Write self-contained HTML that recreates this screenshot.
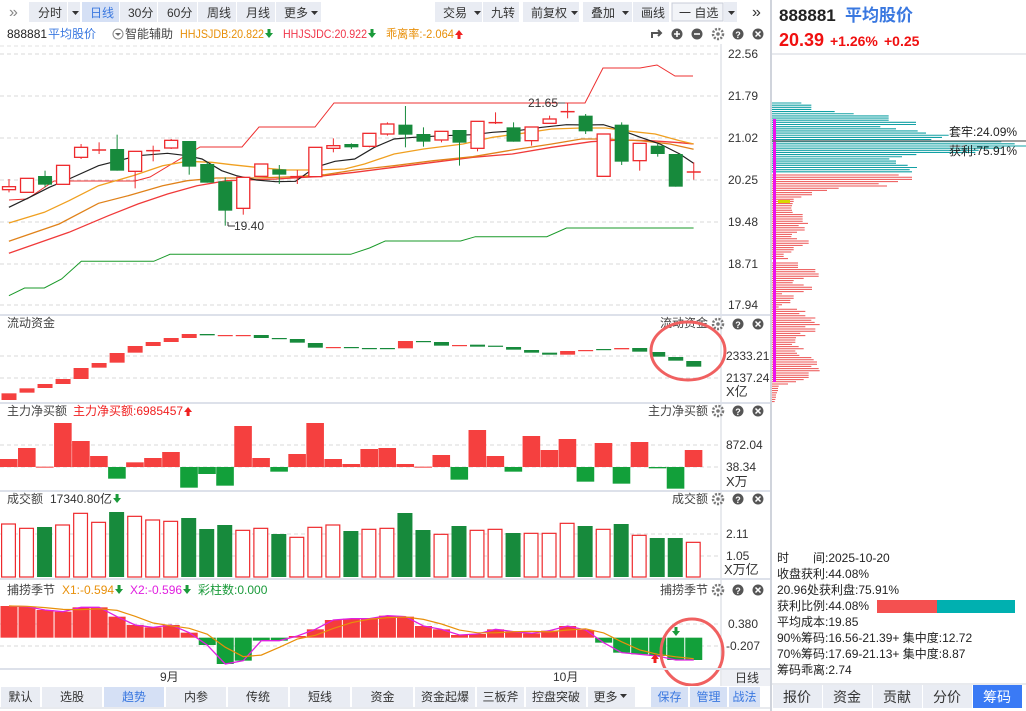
<!DOCTYPE html>
<html><head><meta charset="utf-8">
<style>
body{margin:0;width:1026px;height:711px;overflow:hidden;background:#fff;font-family:"Liberation Sans","Noto Sans CJK SC",sans-serif;}
svg{position:absolute;left:0;top:0}
text{font-family:"Liberation Sans","Noto Sans CJK SC",sans-serif;}
</style></head><body>
<svg id="s" width="1026" height="711" xmlns="http://www.w3.org/2000/svg"></svg>
<script>
const S=document.getElementById('s');let h='';
const R='#ee2a2d',G='#178a3c',RF='#f5403f';
let tid=0;const arrows=[];
function r(x,y,w,hh,f,st){h+=`<rect x="${x}" y="${y}" width="${w}" height="${hh}" fill="${f}"${st?` stroke="${st}"`:''}/>`}
function l(x1,y1,x2,y2,c,w,d){h+=`<line x1="${x1}" y1="${y1}" x2="${x2}" y2="${y2}" stroke="${c}" stroke-width="${w||1}"${d?' stroke-dasharray="4,3"':''}/>`}
function t(x,y,s,c,fs,extra){tid++;h+=`<text id="t${tid}" x="${x}" y="${y}" fill="${c||'#333'}" font-size="${fs||12}" ${extra||''}>${s}</text>`;return 't'+tid}
function ta(x,y,s,c,dir,ac,fs,tl){const id=t(x,y,s,c,fs||12,tl?`textLength="${tl}" lengthAdjust="spacingAndGlyphs"`:'');arrows.push([id,x,y-4,dir,ac,tl]);}
function tr(x,y,s){t(x,y,s,'#444',12,'text-anchor="end"')}
function pl(pts,c,w){h+=`<polyline fill="none" stroke="${c}" stroke-width="${w||1}" points="${pts.map(p=>p.join(',')).join(' ')}"/>`}
function arrD(x,y,c){return `<path d="M${x-1.5} ${y-5}h3v4h2.5l-4 5l-4-5h2.5z" fill="${c}"/>`}
function arrU(x,y,c){return `<path d="M${x-1.5} ${y+5}h3v-4h2.5l-4-5l-4 5h2.5z" fill="${c}"/>`}
r(0,0,770,24,'#fff');
[[29,68],[68,81],[82,120,1],[120,158],[158,198],[198,237],[237,276],[276,322],[435,483],[483,520],[523,580],[583,633],[633,670],[724,738]].forEach(a=>r(a[0],2,a[1]-a[0]-1,20,a[2]?'#d5e0f5':'#e9ecf3'));
r(672,3,51,18,'#f2f4f8','#c8cdd8');
t(9,17,'»','#888',16);
[['分时',38],['日线',90],['30分',128],['60分',167],['周线',207],['月线',246],['更多',284],['交易',443],['九转',491],['前复权',531],['叠加',591],['画线',641],['一 自选',679],['»',752]].forEach(a=>t(a[1],17,a[0],a[0]=='日线'?'#3a78e0':'#333',a[0]=='»'?16:12));
[72,311,474,571,622,728].forEach(x=>h+=`<path d="M${x} 11h7l-3.5 4z" fill="#333"/>`);
t(7,38,'888881','#222',12);t(48,38,'平均股价','#3a78e0',12);
h+=`<circle cx="118" cy="34" r="5" fill="none" stroke="#888"/><path d="M115 33h6l-3 3z" fill="#666"/>`;
t(125,38,'智能辅助','#444',12);
ta(180,38,'HHJSJDB:20.822','#e8900a','d','#1a9a3a',12,84);ta(283,38,'HHJSJDC:20.922','#f0364a','d','#1a9a3a',12,84);ta(386,38,'乖离率:-2.064','#e8900a','u','#f02020',12,68);
function icons(y,set){
 if(set){h+=`<path d="M652 ${y+4}v-5h9m-3-3l3 3l-3 3" fill="none" stroke="#555" stroke-width="2"/>`;
 h+=`<circle cx="677" cy="${y}" r="5.5" fill="#555"/><path d="M674 ${y}h6M677 ${y-3}v6" stroke="#fff" stroke-width="1.6"/>`;
 h+=`<circle cx="697" cy="${y}" r="5.5" fill="#555"/><path d="M694 ${y}h6" stroke="#fff" stroke-width="1.6"/>`;}
 h+=`<circle cx="718" cy="${y}" r="5" fill="none" stroke="#777" stroke-width="2.5" stroke-dasharray="2,1.4"/><circle cx="718" cy="${y}" r="1.8" fill="#777"/>`;
 h+=`<circle cx="738" cy="${y}" r="5.5" fill="#555"/><text x="738" y="${y+4}" fill="#fff" font-size="9" font-weight="bold" text-anchor="middle">?</text>`;
 h+=`<circle cx="758" cy="${y}" r="5.5" fill="#555"/><path d="M755.5 ${y-2.5}l5 5m0-5l-5 5" stroke="#fff" stroke-width="1.5"/>`;
}
icons(34,1);
[[54,'22.56'],[96,'21.79'],[138,'21.02'],[180,'20.25'],[222,'19.48'],[264,'18.71'],[305,'17.94']].forEach(a=>{l(0,a[0],720,a[0],'#d8d8d8',1,1);t(728,a[0]+4,a[1],'#333',12)});
l(0,46,720,46,'#e0e0e0',1,1);
const M=a=>a.map(p=>[+(p[0]/2.03).toFixed(1),+(44+p[1]/3).toFixed(1)]);
pl([[9,200],[27,199],[54,181],[135,181],[150,177],[200,147],[242,147],[259,127],[315,127],[334,103],[585,103],[603,68],[640,68],[657,65],[675,76],[693,76]],'#ee3030');
pl(M([[18,755],[50,732],[90,732],[125,705],[165,652],[312,652],[345,631],[712,631],[750,612],[782,591],[935,591],[965,578],[1110,578],[1150,552],[1408,552]]),'#1a9a2a');
pl(M([[18,628],[140,565],[220,515],[280,480],[340,450],[400,425],[460,410],[560,405],[640,398],[720,385],[800,370],[880,355],[960,340],[1040,330],[1120,310],[1200,293],[1260,288],[1320,290],[1380,296],[1408,300]]),'#f03a3a',1.3);
pl(M([[18,592],[120,540],[200,478],[260,455],[330,425],[380,410],[440,402],[520,402],[600,398],[660,392],[720,378],[800,365],[880,350],[960,338],[1040,318],[1120,300],[1180,285],[1230,285],[1300,290],[1360,300],[1408,316]]),'#e0821a',1.3);
pl(M([[18,537],[90,505],[140,470],[200,425],[270,395],[330,365],[380,352],[430,355],[470,362],[520,370],[580,378],[640,378],[700,375],[740,360],[800,330],[860,315],[940,300],[1000,280],[1060,268],[1120,255],[1180,252],[1230,252],[1280,262],[1330,270],[1380,290],[1408,300]]),'#f0a020',1.3);
pl(M([[18,490],[60,460],[100,430],[140,405],[200,365],[240,350],[280,335],[340,328],[380,335],[410,345],[450,380],[480,395],[520,408],[560,413],[600,412],[640,370],[680,352],[720,345],[760,310],[800,285],[840,280],[900,275],[960,272],[1000,265],[1050,260],[1100,250],[1150,242],[1190,243],[1225,242],[1260,258],[1300,280],[1340,300],[1380,330],[1408,358]]),'#222',1.2);
const C=[['r',428,437,405,445],['r',403,445,403,445],['g',396,422,380,430],['r',364,421,364,421],['r',310,340,300,345],['r',316,320,295,330],['g',315,380,272,380],['r',322,382,322,433],['r',318,322,305,352],['r',289,312,285,315],['g',291,368,291,392],['g',360,416,355,416],['g',412,500,400,545],['r',400,493,400,512],['r',360,397,360,397],['g',376,392,363,420],['r',396,400,378,420],['r',310,398,310,398],['r',305,313,283,325],['g',300,310,298,315],['r',268,307,268,310],['r',240,270,235,275],['g',242,272,186,310],['g',270,293,250,308],['r',262,288,262,295],['g',258,296,258,365],['r',232,313,232,322],['r',234,238,205,240],['g',250,293,235,293],['r',249,290,249,305],['r',225,238,215,240],['r',201,205,176,223],['g',215,262,210,270],['r',270,397,270,397],['g',242,353,235,363],['r',298,350,298,380],['g',305,330,300,338],['g',330,428,330,428],['r',382,386,355,407]];
const Y=z=>44+z/3;
C.forEach((c,i)=>{const x=9+18.02*i,col=c[0]=='r'?R:G;
 l(x,Y(c[3]),x,Y(c[4]),col,1);
 let a=Y(c[1]),b=Y(c[2]);
 if(b-a<2.5){l(x-7,(a+b)/2,x+7,(a+b)/2,col,1.5)}
 else if(c[0]=='r')h+=`<rect x="${x-6.5}" y="${a}" width="13" height="${b-a}" fill="#fff" stroke="${R}" stroke-width="1.3"/>`;
 else r(x-7,a,14,b-a,G);});
t(528,107,'21.65','#333',12);l(558,103,565,103,'#555');
l(228,222,228,226,'#333');l(228,226,235,226,'#333');t(234,230,'19.40','#333',12);
l(721,44,721,686,'#d0d4dc',1);
[314,402,490,578].forEach(y=>r(0,y,770,2,'#dde1ea'));
t(7,327,'流动资金','#444',12);tr(708,327,'流动资金');icons(324,0);
l(0,356,720,356,'#d8d8d8',1,1);l(0,378,720,378,'#d8d8d8',1,1);
t(726,360,'2333.21','#333',12);t(726,382,'2137.24','#333',12);t(726,396,'X亿','#333',13);
const F=[[250,270,'r'],[235,248,'r'],[222,234,'r'],[207,222,'r'],[174,207,'r'],[159,173,'r'],[129,158,'r'],[108,128,'r'],[96,108,'r'],[84,96,'r'],[72,84,'r'],[72,76,'g'],[75,77,'r'],[75,77,'r'],[75,84,'g'],[84,87,'g'],[87,98,'g'],[99,113,'g'],[111,113,'r'],[111,114,'g'],[114,116,'g'],[114,116,'g'],[93,115,'r'],[93,96,'g'],[96,107,'g'],[105,108,'r'],[104,110,'g'],[107,110,'g'],[111,119,'g'],[120,128,'g'],[128,134,'g'],[123,134,'r'],[120,122,'r'],[117,119,'g'],[114,118,'r'],[114,125,'g'],[126,140,'g'],[141,152,'g'],[153,170,'g']];
F.forEach((f,i)=>{const a=310+f[0]/3,b=Math.max(310+f[1]/3,a+1.2);r(i*18.02+1.5,a,15,b-a,f[2]=='r'?RF:G)});
t(7,415,'主力净买额','#444',12);ta(73,415,'主力净买额:6985457','#f02020','u','#f02020');
tr(708,415,'主力净买额');icons(411,0);
l(0,445,720,445,'#d8d8d8',1,1);l(0,467,720,467,'#d8d8d8',1,1);
t(726,449,'872.04','#333',12);t(726,471,'38.34','#333',12);t(726,486,'X万','#333',13);
const Z=[447,414,470,339,393,438,-506,457,444,426,-533,-492,-527,348,444,-485,432,339,447,462,417,414,462,470,435,-509,360,438,-485,378,420,387,-515,399,-521,396,-475,-536,420];
const z0=467;
Z.forEach((v,i)=>{const x=i*18.02;if(v>0){const y=310+v/3;r(x,y,17.6,Math.max(z0-y,1),RF)}else{const y=310-v/3;r(x,z0,17.6,y-z0,'#12a03a')}});
t(7,503,'成交额','#444',12);ta(50,503,'17340.80亿','#333','d','#1a9a3a');
tr(708,503,'成交额');icons(499,0);
l(0,534,720,534,'#d8d8d8',1,1);l(0,556,720,556,'#d8d8d8',1,1);
t(726,538,'2.11','#333',12);t(726,560,'1.05','#333',12);t(724,574,'X万亿','#333',13);
const V=[102,115,111,105,70,97,66,79,90,94,84,117,105,121,115,132,142,112,105,123,118,115,69,120,133,108,121,118,129,130,130,100,108,118,102,136,144,144,157];
const VG=[2,6,10,11,12,15,19,22,23,25,28,32,34,36,37];
V.forEach((v,i)=>{const x=i*18.02+1,y=490+v/3;if(VG.includes(i))r(x,y,15,577-y,G);else h+=`<rect x="${x+0.6}" y="${y}" width="13.8" height="${577-y}" fill="#fff" stroke="${R}" stroke-width="1.2"/>`});
t(7,594,'捕捞季节','#444',12);ta(62,594,'X1:-0.594','#e8900a','d','#1a9a3a');
ta(130,594,'X2:-0.596','#e020e0','d','#1a9a3a');t(198,594,'彩柱数:0.000','#1a9a3a',12);
tr(708,594,'捕捞季节');icons(590,0);
l(0,624,720,624,'#d8d8d8',1,1);l(0,646,720,646,'#d8d8d8',1,1);
t(728,628,'0.380','#333',12);t(726,650,'-0.207','#333',12);
const B=[108,110,120,125,112,112,140,165,172,165,188,-225,-282,-272,-212,-212,198,178,150,146,146,137,140,168,178,195,192,178,185,190,182,168,180,-218,-248,-253,-258,-270,-270];
const b0=570+203/3;const mp=[],op=[];
B.forEach((v,i)=>{const x=i*18.02;let y=570+Math.abs(v)/3;if(v>0)r(x+0.5,y,17,b0-y,'#f53c3c');else r(x+0.5,b0,17,y-b0,'#12a03a');mp.push([x+9,y]);});
pl(mp,'#e020e0',1.3);
for(let i=0;i<B.length;i++){let s=0,n=0;for(let j=Math.max(0,i-2);j<=i;j++){s+=mp[j][1];n++}op.push([mp[i][0],+(s/n).toFixed(1)])}
pl(op,'#e8900a',1.2);
h+=arrD(676,632,'#1a9a3a');h+=arrU(655,658,'#f02020');
h+=`<ellipse cx="688" cy="351" rx="37" ry="29" fill="none" stroke="#f06060" stroke-width="3"/>`;
h+=`<ellipse cx="692" cy="652" rx="31" ry="33" fill="none" stroke="#f06060" stroke-width="3"/>`;
r(0,668,770,2,'#dde1ea');
t(160,681,'9月','#333',12);t(553,681,'10月','#333',12);
r(722,670,48,16,'#eef0f5');t(735,682,'日线','#333',12);
r(0,686,770,25,'#fff');
const TB=[[0,41,'默认'],[41,103,'选股'],[103,165,'趋势'],[165,227,'内参'],[227,289,'传统'],[289,351,'短线'],[351,414,'资金'],[414,476,'资金起爆'],[476,525,'三板斧'],[525,587,'控盘突破'],[587,636,'更多'],[650,689,'保存'],[689,728,'管理'],[728,761,'战法']];
TB.forEach(a=>{const act=a[2]=='趋势'||a[0]>=650;r(a[0]+1,687,a[1]-a[0]-2,20,act?'#d5e0f5':'#e9ecf3');h+=`<text x="${(a[0]+a[1])/2-(a[2]=='更多'?6:0)}" y="701" fill="${act?'#3a78e0':'#333'}" font-size="12" text-anchor="middle">${a[2]}</text>`});
h+=`<path d="M620 694h7l-3.5 4z" fill="#333"/>`;
l(0,708,770,708,'#d0d4dc');
r(770,0,2,711,'#d0d4dc');
t(779,21,'888881','#222',17,'font-weight="bold"');t(845,21,'平均股价','#3a78e0',17,'font-weight="bold"');
t(779,46,'20.39','#f01010',18,'font-weight="bold"');t(830,46,'+1.26%','#f01010',14,'font-weight="bold"');t(884,46,'+0.25','#f01010',14,'font-weight="bold"');
l(772,54,1026,54,'#d0d4dc');
const TL=[88,118,118,118,188,245,350,350,350,432,432,325,372,437,462,530,510,478,688,728,765,690,620,610,433,390,352,372,372,407,435,413,420];
TL.forEach((v,i)=>{const y=103+i*2.15;l(772,y,772+v/3,y,'#12a0a4',1.1)});
const RL=[380,420,420,378,320,345,200,165,120,120,88,65,65,62,60,58,60,62,92,92,92,92,108,80,98,98,75,60,58,75,110,110,92,65,65,58,35,35,48,0,78,78,78,130,130,140,140,95,65,62,95,120,120,95,30,65,65,55,55,30,20,75,100,82,100,130,118,128,143,100,130,130,85,100,72,70,70,60,80,95,70,75,82,118,125,135,135,118,140,143,110,110,110,95,72,48,20,18,18,15,12,12,10,8];
RL.forEach((v,i)=>{const y=175+i*2.2;if(v>0)l(772,y,772+v/3,y,'#ec5050',1)});
r(778,200,12,3,'#d8d800');
r(773,119,3,263,'#ee10ee');
l(772,141,1026,141,'#666',1.2);
t(949,136,'套牢:24.09%','#222',12);t(949,155,'获利:75.91%','#222',12);
r(772,540,254,146,'#fff');
[['时　　间:2025-10-20',558],['收盘获利:44.08%',574],['20.96处获利盘:75.91%',590],['获利比例:44.08%',606],['平均成本:19.85',622],['90%筹码:16.56-21.39+ 集中度:12.72',638],['70%筹码:17.69-21.13+ 集中度:8.87',654],['筹码乖离:2.74',670]].forEach(a=>t(777,a[1]+4,a[0],'#222',12));
r(877,600,60,13,'#f45050');r(937,600,78,13,'#00b0b0');
l(772,684,1026,684,'#d0d4dc');
[['报价',772],['资金',822],['贡献',872],['分价',922],['筹码',972]].forEach((a,i)=>{r(a[1]+1,685,49,23,i==4?'#3a7af5':'#e9ecf3');h+=`<text x="${a[1]+25}" y="702" fill="${i==4?'#fff':'#333'}" font-size="14" text-anchor="middle">${a[0]}</text>`});
S.innerHTML=h;
let extra='';
arrows.forEach(a=>{const el=document.getElementById(a[0]);let w=a[5]||80;if(!a[5]){try{w=el.getComputedTextLength()}catch(e){}}const x=a[1]+w+5;extra+=a[3]=='d'?arrD(x,a[2],a[4]):arrU(x,a[2],a[4]);});
S.insertAdjacentHTML('beforeend',extra);
</script>
</body></html>
